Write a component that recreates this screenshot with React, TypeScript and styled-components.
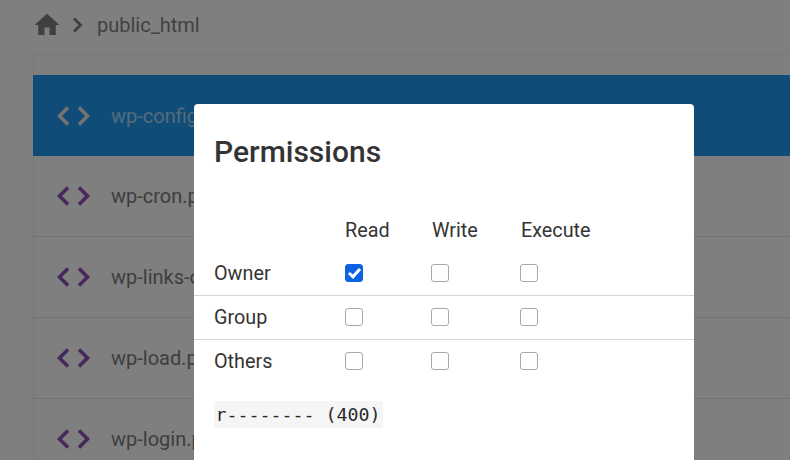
import React from "react";
import styled, { createGlobalStyle } from "styled-components";

const GlobalStyle = createGlobalStyle`
    html, body {
        margin: 0;
        height: 460px;
        overflow: hidden;
        background: #fff;
        font-family: Roboto, "Liberation Sans", sans-serif;
    }
`;

const Page = styled.div`
    width: 790px;
    height: 460px;
    overflow: hidden;
`;

const Breadcrumb = styled.nav`
    display: flex;
    align-items: center;
    height: 50px;
    margin-bottom: 5px;
    padding-left: 32px;
    color: #838383;
    font-size: 20px;

    span {
        margin-left: 12px;
    }
`;

const FileList = styled.ul`
    list-style: none;
    margin: 0 0 0 33px;
    padding: 19px 0 0;
    width: 900px;
    border-top: 1px solid #f4f4f4;
    border-left: 1px solid #ededed;
    box-sizing: border-box;
`;

const FileRow = styled.li<{ $selected?: boolean }>`
    display: flex;
    align-items: center;
    gap: 20px;
    height: 81px;
    margin-left: ${(p) => (p.$selected ? "-1px" : "0")};
    padding-left: ${(p) => (p.$selected ? "24px" : "23px")};
    box-sizing: border-box;
    font-size: 20px;
    color: ${(p) => (p.$selected ? "#fff" : "#7d7d7d")};
    background: ${(p) => (p.$selected ? "#2199f0" : "transparent")};
    border-bottom: ${(p) => (p.$selected ? "none" : "1px solid #e4e4e4")};

    span {
        opacity: ${(p) => (p.$selected ? 0.6 : 1)};
    }
`;

const CodeGlyph = styled.svg<{ $selected?: boolean }>`
    flex: none;
    color: ${(p) => (p.$selected ? "#e6e6e6" : "#8c50b4")};
`;

// the dialog centres on a page wider than the visible window
const Overlay = styled.div`
    position: fixed;
    inset: 0 auto 0 0;
    width: 888px;
    display: flex;
    justify-content: center;
    align-items: flex-start;
    padding-top: 104px;
    box-sizing: border-box;
    background: rgba(0, 0, 0, 0.5);
`;

const Modal = styled.div`
    width: 500px;
    height: 420px;
    flex: none;
    background: #fff;
    border-radius: 4px;
    color: #343434;
`;

const Title = styled.h2`
    margin: 0;
    padding: 29px 20px 0;
    height: 104px;
    box-sizing: border-box;
    font-size: 30px;
    line-height: 38px;
    font-weight: 500;
`;

const PermTable = styled.div`
    font-size: 19.8px;
`;

const PermRow = styled.div<{ $lined?: boolean; $header?: boolean }>`
    display: grid;
    grid-template-columns: ${(p) => (p.$header ? "131px 87px 89px 1fr" : "131px 86px 89px 1fr")};
    align-items: center;
    height: 44px;
    padding-left: 20px;
    padding-top: ${(p) => (p.$header ? "2px" : "0")};
    box-sizing: border-box;
    border-bottom: 1px solid ${(p) => (p.$lined ? "#d6d6d6" : "transparent")};
`;

const Check = styled.input.attrs({ type: "checkbox", readOnly: true })`
    appearance: none;
    display: block;
    position: relative;
    margin: 0 0 1px;
    width: 18px;
    height: 18px;
    box-sizing: border-box;
    border: 1px solid #a9a9a9;
    border-radius: 3px;
    background: #fff;

    &:checked {
        background: #0d63e0;
        border-color: #0d63e0;
    }

    &:checked::after {
        content: "";
        position: absolute;
        left: 4.5px;
        top: 1px;
        width: 4px;
        height: 9px;
        border: solid #fff;
        border-width: 0 3px 3px 0;
        transform: rotate(42deg);
    }
`;

const Mode = styled.code`
    display: inline-block;
    margin: 17px 0 0 20px;
    padding: 0 2px 0 1.5px;
    border-radius: 3px;
    background: #f5f5f5;
    font-family: "DejaVu Sans Mono", monospace;
    font-size: 18.3px;
    line-height: 27px;
    color: #2a2a2a;
`;

const files = ["wp-config.php", "wp-cron.php", "wp-links-opml.php", "wp-load.php", "wp-login.php"];

const roles = [
    { name: "Owner", read: true },
    { name: "Group", read: false },
    { name: "Others", read: false },
];

function App() {
    return (
        <Page>
            <GlobalStyle />
            <Breadcrumb>
                <svg width="30" height="30" viewBox="0 0 24 24" fill="#808080">
                    <path d="M10 20v-6h4v6h5v-8h3L12 3 2 12h3v8z" />
                </svg>
                <svg width="14" height="16" viewBox="0 0 14 16" fill="none" stroke="#808080" strokeWidth="2.8" style={{ marginLeft: 9 }}>
                    <path d="M3 1.5 9.5 8 3 14.5" />
                </svg>
                <span>public_html</span>
            </Breadcrumb>
            <FileList>
                {files.map((file, i) => (
                    <FileRow key={file} $selected={i === 0}>
                        <CodeGlyph $selected={i === 0} width="34" height="22" viewBox="0 0 34 22" fill="none" stroke="currentColor" strokeWidth="3.6">
                            <path d="M11 2.5 2.5 11l8.5 8.5M22 2.5l8.5 8.5-8.5 8.5" />
                        </CodeGlyph>
                        <span>{file}</span>
                    </FileRow>
                ))}
            </FileList>
            <Overlay>
                <Modal>
                    <Title>Permissions</Title>
                    <PermTable>
                        <PermRow $header>
                            <div />
                            <div>Read</div>
                            <div>Write</div>
                            <div>Execute</div>
                        </PermRow>
                        {roles.map((role, i) => (
                            <PermRow key={role.name} $lined={i < 2}>
                                <div>{role.name}</div>
                                <div><Check defaultChecked={role.read} /></div>
                                <div><Check /></div>
                                <div><Check /></div>
                            </PermRow>
                        ))}
                    </PermTable>
                    <Mode>r-------- (400)</Mode>
                </Modal>
            </Overlay>
        </Page>
    );
}

export default App;
